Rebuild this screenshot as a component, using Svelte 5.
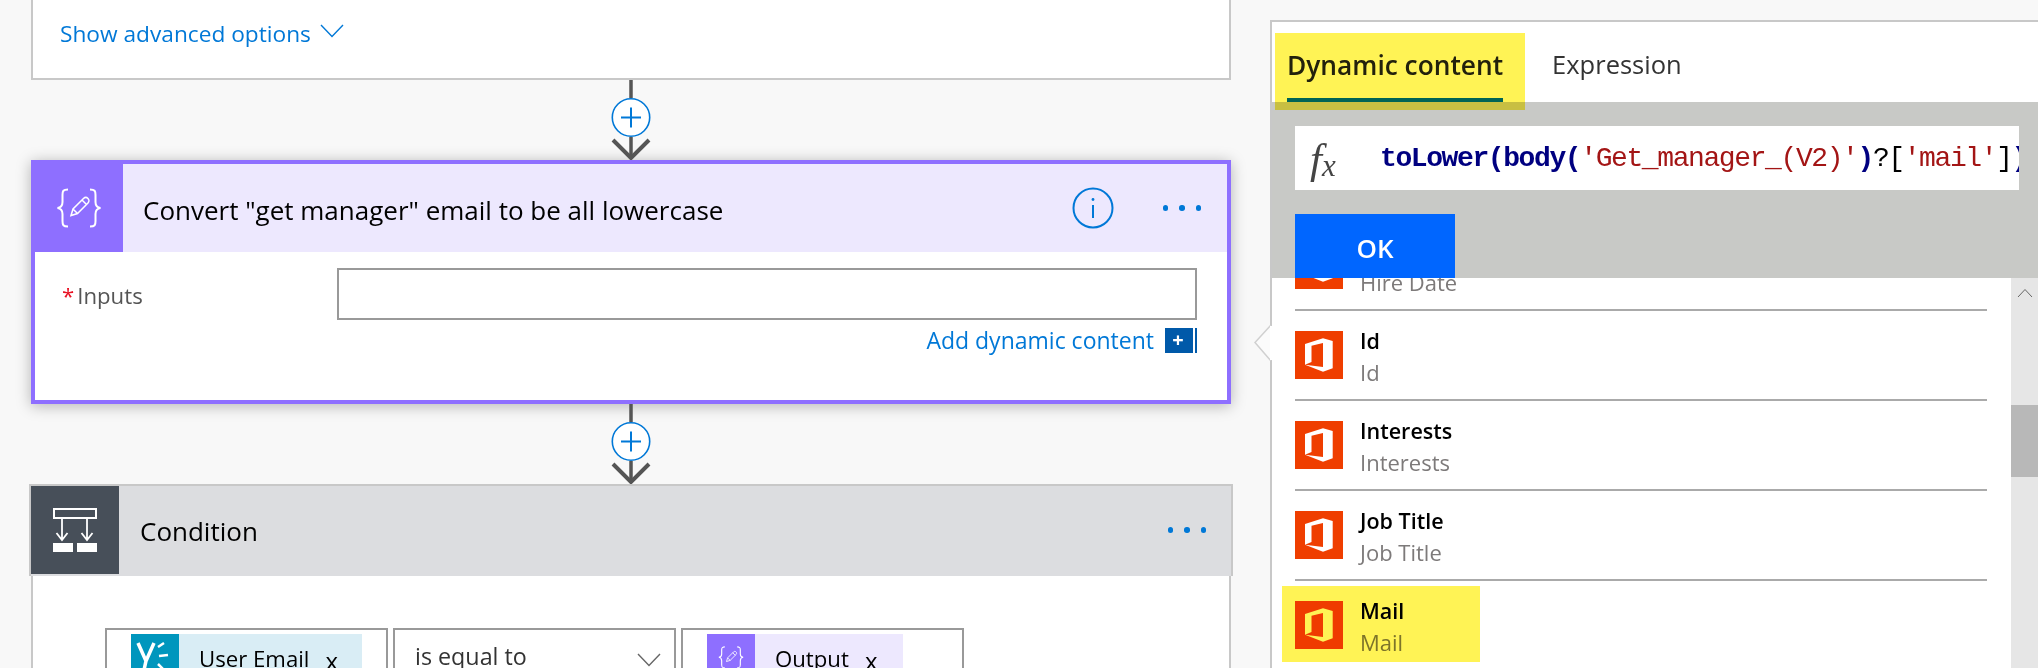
<script>
  const items = [
    { title: 'Hire Date' },
    { title: 'Id' },
    { title: 'Interests' },
    { title: 'Job Title' },
    { title: 'Mail' }
  ];
</script>

{#snippet connector()}
  <svg class="connector" viewBox="0 0 40 80" width="40" height="80" aria-hidden="true">
    <path d="M20 0V18M20 57V77" stroke="#555" stroke-width="3.5" fill="none" />
    <path d="M2 60L20 78L38 60" stroke="#555" stroke-width="4" fill="none" />
    <circle cx="20" cy="37.5" r="18.7" fill="#fff" stroke="#0078d7" stroke-width="1.6" />
    <path d="M10 37.5H30M20 27.5V47.5" stroke="#0078d7" stroke-width="2" fill="none" />
  </svg>
{/snippet}

{#snippet braces(size)}
  <svg viewBox="0 0 46 40" width={size} height={size * 40 / 46} aria-hidden="true">
    <path d="M12 1.5C7 1.5 6.500 3 6.500 7V14C6.500 17.500 5 19.500 1.500 20C5 20.500 6.500 22.500 6.500 26V33C6.500 37 7 38.500 12 38.500M34 1.500C39 1.500 39.500 3 39.500 7V14C39.500 17.500 41 19.500 44.500 20C41 20.500 39.500 22.500 39.500 26V33C39.500 37 39 38.500 34 38.500" fill="none" stroke="#fff" stroke-width="2" />
    <path d="M15 27.500L17 21L27.500 10.500C29 9 31 9.500 32 10.500C33 11.500 33.500 13.500 32 15L21.500 25.500ZM17 21L21.500 25.500M26 12L30.500 16.500" fill="none" stroke="#fff" stroke-width="1.500" />
  </svg>
{/snippet}

<div class="page">
  <main class="flow">
    <section class="top-card">
      <button class="advanced">Show advanced options
        <svg viewBox="0 0 24 14" width="24" height="14" aria-hidden="true"><path d="M1 1L12 12.500L23 1" fill="none" stroke="#0078d7" stroke-width="1.400" /></svg>
      </button>
    </section>

    {@render connector()}

    <section class="compose">
      <header class="compose-head">
        <div class="compose-icon">{@render braces(46)}</div>
        <h2>Convert "get manager" email to be all lowercase</h2>
        <svg class="info" viewBox="0 0 42 42" width="42" height="42" aria-hidden="true">
          <circle cx="21" cy="21" r="19.500" fill="none" stroke="#0078d7" stroke-width="2" />
          <path d="M21 18V31" stroke="#0078d7" stroke-width="2" />
          <circle cx="21" cy="12.500" r="1.400" fill="#0078d7" />
        </svg>
        <div class="dots"><i></i><i></i><i></i></div>
      </header>
      <div class="compose-body">
        <div class="input-row">
          <label for="inputs"><b>*</b>Inputs</label>
          <input id="inputs" type="text" />
        </div>
        <div class="add-row">
          <span>Add dynamic content</span>
          <span class="add-icon"><span class="add-plus">+</span></span>
        </div>
      </div>
    </section>

    {@render connector()}

    <section class="condition">
      <header class="condition-head">
        <div class="condition-icon">
          <svg viewBox="0 0 44 44" width="44" height="44" aria-hidden="true">
            <rect x="1" y="1" width="42" height="9" fill="none" stroke="#fff" stroke-width="2" />
            <path d="M9 11V32M34 11V32M3.500 25L9 32L14.500 25M28.500 25L34 32L39.500 25" fill="none" stroke="#fff" stroke-width="1.800" />
            <rect x="0" y="35" width="20" height="9" fill="#fff" />
            <rect x="24" y="35" width="20" height="9" fill="#fff" />
          </svg>
        </div>
        <h2>Condition</h2>
        <div class="dots"><i></i><i></i><i></i></div>
      </header>
      <div class="condition-body">
        <div class="field">
          <div class="token yammer">
            <span class="token-icon y-icon">
              <svg viewBox="0 0 48 48" width="48" height="48" aria-hidden="true">
                <path d="M7 9L15 27L13 36M23 9L15 27" fill="none" stroke="#fff" stroke-width="3.500" />
                <path d="M27 13L33 9M28 22L37 21M27 30L33 36" fill="none" stroke="#fff" stroke-width="2.500" />
              </svg>
            </span>
            <span class="token-text">User Email</span><span class="token-x">x</span>
          </div>
        </div>
        <div class="field select">
          <span>is equal to</span>
          <svg viewBox="0 0 24 14" width="24" height="14" aria-hidden="true"><path d="M1 1L12 12.500L23 1" fill="none" stroke="#666" stroke-width="1.400" /></svg>
        </div>
        <div class="field">
          <div class="token output">
            <span class="token-icon o-icon">{@render braces(26)}</span>
            <span class="token-text">Output</span><span class="token-x">x</span>
          </div>
        </div>
      </div>
    </section>
  </main>

  <aside class="panel">
    <nav class="tabs">
      <span class="tab active">Dynamic content</span>
      <span class="tab">Expression</span>
    </nav>
    <div class="editor">
      <div class="expr">
        <span class="fx">f<sub>x</sub></span>
        <code><span class="fn">toLower(body(</span><span class="str">'Get_manager_(V2)'</span><span class="fn">)</span>?[<span class="str">'mail'</span>]<span class="fn">)</span></code>
      </div>
      <button class="ok">OK</button>
    </div>
    <div class="list-wrap">
      <ul class="list">
        {#each items as item}
          <li class="item">
            <svg class="office" viewBox="0 0 48 48" width="48" height="48" aria-hidden="true">
              <rect width="48" height="48" fill="#ef3e00" />
              <path d="M10 13L28 7.300L37.700 10V37.300L28 40.700L10 33.700L28 36V12L16.500 14.700V31L10 33.700Z" fill="#fff" />
            </svg>
            <div class="item-text">
              <strong>{item.title}</strong>
              <span>{item.title}</span>
            </div>
          </li>
        {/each}
      </ul>
      <div class="scrollbar">
        <svg viewBox="0 0 16 10" width="16" height="10" aria-hidden="true"><path d="M1 9L8 1.500L15 9" fill="none" stroke="#666" stroke-width="1" /></svg>
        <div class="thumb"></div>
      </div>
    </div>
    <svg class="caret" viewBox="0 0 18 36" width="18" height="36" aria-hidden="true">
      <path d="M17 0L1 17.500L17 36" fill="#fbfbfb" stroke="#d0d0d0" stroke-width="1.500" />
      <rect x="16" y="1" width="3" height="34" fill="#fff" />
    </svg>
    <div class="hl hl-tab"></div>
    <div class="hl hl-mail"></div>
  </aside>
</div>

<style>
  :global(body) {
    margin: 0;
    background: #f8f8f8;
  }
  .page {
    width: 2038px;
    height: 668px;
    overflow: hidden;
    display: flex;
    align-items: flex-start;
    padding-left: 31px;
    box-sizing: border-box;
    background: #f8f8f8;
    font-family: "Open Sans", "Noto Sans", sans-serif;
    color: #000;
  }
  .flow {
    width: 1200px;
    flex: none;
    display: flex;
    flex-direction: column;
    align-items: stretch;
  }
  .connector {
    display: block;
    align-self: center;
    position: relative;
    z-index: 1;
  }
  button {
    font-family: inherit;
    border: 0;
    padding: 0;
    cursor: pointer;
  }
  .top-card {
    height: 78px;
    box-sizing: content-box;
    background: #fff;
    border: 2px solid #c8c8c8;
    border-top: 0;
    padding-left: 27px;
    display: flex;
    align-items: flex-start;
  }
  .advanced {
    background: none;
    color: #0078d7;
    font-size: 22.700px;
    line-height: 28px;
    margin-top: 20px;
    display: flex;
    gap: 9px;
    align-items: flex-start;
  }
  .advanced svg {
    margin-top: 4px;
  }
  .compose {
    height: 244px;
    box-sizing: border-box;
    border: 4px solid #8e6fff;
    background: #fff;
    box-shadow: 0 2px 14px rgba(0, 0, 0, 0.28);
    display: flex;
    flex-direction: column;
  }
  .compose-head {
    height: 88px;
    flex: none;
    background: #ede8fe;
    display: flex;
    align-items: center;
  }
  .compose-icon {
    width: 88px;
    align-self: stretch;
    background: #8e6fff;
    display: flex;
    align-items: center;
    justify-content: center;
    padding-right: 1px;
    box-sizing: border-box;
  }
  h2 {
    margin: 0;
    font-weight: 400;
    font-size: 26px;
    line-height: 30px;
  }
  .compose-head h2 {
    margin-left: 20px;
    margin-top: 4px;
    flex: 1;
    white-space: nowrap;
  }
  .info {
    margin-right: 49px;
    margin-top: -1px;
  }
  .dots {
    display: flex;
    gap: 11px;
    margin-right: 26px;
  }
  .dots i {
    display: block;
    width: 5.500px;
    height: 5.500px;
    border-radius: 50%;
    background: #0078d7;
  }
  .compose-body {
    flex: 1;
    padding: 16px 30px 0 27px;
  }
  .input-row {
    display: flex;
    align-items: center;
  }
  label {
    width: 275px;
    flex: none;
    font-size: 22.200px;
    color: #555;
    line-height: 28px;
    display: flex;
    gap: 3px;
    padding-top: 3px;
  }
  label b {
    color: #e81123;
    font-weight: 400;
  }
  input {
    flex: 1;
    min-width: 0;
    height: 52px;
    box-sizing: border-box;
    border: 2px solid #999;
    background: #fff;
    padding: 0;
    outline: none;
  }
  .add-row {
    margin-top: 8px;
    display: flex;
    justify-content: flex-end;
    align-items: center;
    gap: 11px;
    color: #0078d7;
    font-size: 23px;
    line-height: 25px;
  }
  .add-icon {
    width: 32px;
    height: 25px;
    box-sizing: border-box;
    background: #0059a9;
    border-right: 6px solid #0059a9;
    display: flex;
    position: relative;
  }
  .add-icon::after {
    content: "";
    position: absolute;
    right: -4px;
    top: 0;
    width: 2px;
    height: 25px;
    background: #fff;
  }
  .add-plus {
    flex: 1;
    text-align: center;
    color: #fff;
    font-weight: 700;
    font-size: 20px;
    line-height: 24px;
  }
  .condition {
    margin: 0 -2px;
    display: flex;
    flex-direction: column;
  }
  .condition-head {
    height: 88px;
    border: 2px solid #c8c8c8;
    border-bottom-width: 0;
    padding-bottom: 2px;
    background: #dcdde0;
    display: flex;
    align-items: center;
  }
  .condition-icon {
    width: 88px;
    height: 88px;
    background: #474f59;
    align-self: flex-start;
    display: flex;
    align-items: center;
    justify-content: center;
  }
  .condition-head h2 {
    margin-left: 21px;
    margin-top: 2px;
    flex: 1;
  }
  .condition-head .dots {
    margin-right: 25px;
  }
  .condition-body {
    margin: 0 2px;
    height: 92px;
    background: #fff;
    border: 2px solid #c8c8c8;
    border-top: 0;
    border-bottom: 0;
    box-sizing: border-box;
    padding: 52px 0 0 72px;
    display: flex;
    gap: 5px;
  }
  .field {
    width: 283px;
    height: 80px;
    box-sizing: border-box;
    border: 2.500px solid #999;
    padding: 3.500px 0 0 24px;
    flex: none;
  }
  .select {
    padding: 0 13px 0 20px;
    display: flex;
    justify-content: space-between;
    align-items: flex-start;
    font-size: 23.300px;
    line-height: 28px;
    color: #333;
  }
  .select span {
    margin-top: 12px;
  }
  .select svg {
    margin-top: 23px;
  }
  .token {
    height: 60px;
    display: flex;
    font-size: 22.200px;
    line-height: 28px;
  }
  .yammer {
    width: 231px;
    background: #d9edf5;
  }
  .output {
    width: 196px;
    background: #ede8fe;
  }
  .token-icon {
    width: 48px;
    height: 48px;
    flex: none;
    display: flex;
    align-items: center;
    justify-content: center;
  }
  .y-icon {
    background: #0096bd;
  }
  .o-icon {
    background: #8e6fff;
  }
  .token-text {
    margin: 11px 0 0 20px;
    white-space: nowrap;
  }
  .token-x {
    margin: 13px 0 0 16px;
    font-size: 24px;
  }
  .panel {
    position: relative;
    flex: none;
    width: 768px;
    margin: 20px 0 0 39px;
    height: 648px;
    box-sizing: border-box;
    background: #fff;
    border-left: 2px solid #c8c8c8;
    border-top: 2px solid #c8c8c8;
    display: flex;
    flex-direction: column;
  }
  .tabs {
    height: 80px;
    flex: none;
    display: flex;
    padding-left: 15px;
    gap: 49px;
    font-size: 25.500px;
    color: #333;
  }
  .tab {
    height: 80px;
    box-sizing: border-box;
    line-height: 84px;
    white-space: nowrap;
  }
  .tab.active {
    color: #222;
    font-weight: 600;
    border-bottom: 4px solid #0068ff;
    font-size: 26.300px;
    line-height: 86px;
  }
  .editor {
    height: 176px;
    flex: none;
    background: #c8c9c6;
    padding: 24px 0 0 23px;
    box-sizing: border-box;
  }
  .expr {
    width: 724px;
    height: 64px;
    background: #fff;
    display: flex;
    align-items: center;
    overflow: hidden;
    white-space: nowrap;
  }
  .fx {
    font-family: "Liberation Serif", serif;
    font-style: italic;
    font-size: 43px;
    color: #444;
    width: 85px;
    flex: none;
    padding-left: 15px;
    box-sizing: border-box;
  }
  .fx sub {
    font-size: 31px;
    vertical-align: -3px;
    line-height: 0;
  }
  code {
    font-family: "Liberation Mono", monospace;
    font-size: 28px;
    letter-spacing: -1.400px;
    color: #000;
  }
  .fn {
    color: #000080;
    font-weight: 700;
  }
  .str {
    color: #a31515;
  }
  .ok {
    display: block;
    width: 160px;
    height: 64px;
    margin-top: 24px;
    background: #0066ff;
    color: #fff;
    font-size: 26px;
    font-weight: 600;
    padding-top: 4px;
  }
  .list-wrap {
    flex: 1;
    min-height: 0;
    display: flex;
    overflow: hidden;
  }
  .list {
    flex: 1;
    list-style: none;
    margin: -57px 0 0;
    padding: 0 24px 0 23px;
  }
  .item {
    height: 90px;
    box-sizing: border-box;
    padding-top: 20px;
    border-bottom: 2px solid #aaa;
    display: flex;
    gap: 17px;
  }
  .item:last-child {
    border-bottom: 0;
  }
  .office {
    flex: none;
  }
  .item-text {
    display: flex;
    flex-direction: column;
    margin-top: -4px;
  }
  .item-text strong {
    font-weight: 600;
    font-size: 21.500px;
    line-height: 28px;
    color: #000;
  }
  .item-text span {
    font-size: 22px;
    line-height: 28px;
    margin-top: 3px;
    color: #7d7a7a;
  }
  .scrollbar {
    width: 27px;
    flex: none;
    background: #e6e6e6;
    display: flex;
    flex-direction: column;
    align-items: center;
    padding-top: 10px;
    box-sizing: border-box;
  }
  .thumb {
    width: 100%;
    height: 72px;
    margin-top: 107px;
    background: #b8b8b8;
  }
  .caret {
    position: absolute;
    left: -18px;
    top: 303px;
  }
  .hl {
    position: absolute;
    background: #fff355;
    mix-blend-mode: multiply;
  }
  .hl-tab {
    left: 3px;
    top: 11px;
    width: 250px;
    height: 77px;
  }
  .hl-mail {
    left: 10px;
    top: 564px;
    width: 198px;
    height: 76px;
  }
</style>
